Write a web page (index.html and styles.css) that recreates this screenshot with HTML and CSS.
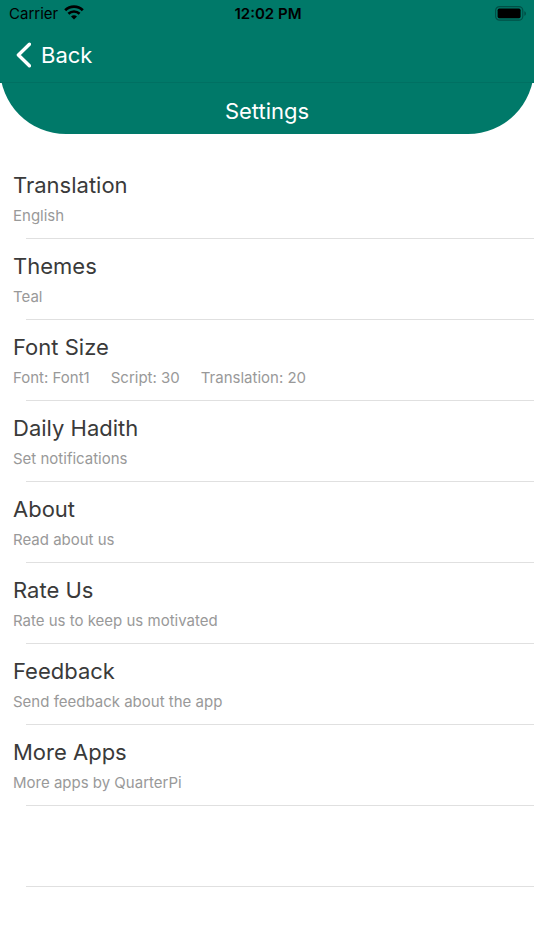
FILE: index.html
```
<!DOCTYPE html>
<html lang="en">
<head>
    <meta charset="UTF-8">
    <meta name="viewport" content="width=device-width, initial-scale=1">
    <title>Settings</title>
    <link rel="stylesheet" href="styles.css">
</head>
<body>
    <header class="top">
        <div class="status-bar">
            <div class="carrier">
                <span>Carrier</span>
                <svg class="wifi" width="20" height="15" viewBox="0 0 20 15" aria-hidden="true">
                    <path d="M1.2 5.2a12.6 12.6 0 0 1 17.6 0" fill="none" stroke="#000" stroke-width="2.8"/>
                    <path d="M4.4 8.7a8.1 8.1 0 0 1 11.2 0" fill="none" stroke="#000" stroke-width="2.6"/>
                    <path d="M7 11.6a4.4 4.4 0 0 1 6 0L10 14.6z" fill="#000"/>
                </svg>
            </div>
            <span class="time">12:02 PM</span>
            <svg class="battery" width="32" height="15" viewBox="0 0 32 15" aria-hidden="true">
                <rect x=".6" y=".6" width="27.2" height="13.6" rx="4" fill="none" stroke="#004f46" stroke-width="1.2"/>
                <rect x="2.6" y="2.6" width="23" height="9.6" rx="1.6" fill="#000"/>
                <path d="M29.3 5.2c2.2.6 2.2 4 0 4.6z" fill="#004f46"/>
            </svg>
        </div>
        <nav class="nav-bar">
            <button type="button" class="back">
                <svg width="15" height="26" viewBox="0 0 15 26" aria-hidden="true">
                    <path d="M13.4 2.3L2.4 13L13.4 23.7" fill="none" stroke="#fff" stroke-width="3.4" stroke-linecap="round" stroke-linejoin="round"/>
                </svg>
                <span>Back</span>
            </button>
        </nav>
    </header>

    <div class="banner">
        <h1>Settings</h1>
    </div>

    <ul class="settings">
        <li><a href="#translation"><span class="title">Translation</span><span class="detail">English</span></a></li>
        <li><a href="#themes"><span class="title">Themes</span><span class="detail">Teal</span></a></li>
        <li>
            <a href="#font-size">
                <span class="title">Font Size</span>
                <span class="detail"><span>Font: Font1</span><span>Script: 30</span><span>Translation: 20</span></span>
            </a>
        </li>
        <li><a href="#daily-hadith"><span class="title">Daily Hadith</span><span class="detail">Set notifications</span></a></li>
        <li><a href="#about"><span class="title">About</span><span class="detail">Read about us</span></a></li>
        <li><a href="#rate"><span class="title">Rate Us</span><span class="detail">Rate us to keep us motivated</span></a></li>
        <li><a href="#feedback"><span class="title">Feedback</span><span class="detail">Send feedback about the app</span></a></li>
        <li><a href="#more-apps"><span class="title">More Apps</span><span class="detail">More apps by QuarterPi</span></a></li>
        <li></li>
    </ul>
</body>
</html>
```
FILE: styles.css
```
* {
    box-sizing: border-box;
}
body {
    margin: 0;
    background-color: #ffffff;
    color: #3a3a3a;
    font-family: Inter, "Liberation Sans", sans-serif;
}

/* Header */
.top {
    position: relative;
    z-index: 1;
    background-color: #007969;
    border-bottom: 1px solid #007062;
}
.status-bar {
    display: grid;
    grid-template-columns: 1fr auto 1fr;
    align-items: center;
    height: 28px;
    padding: 0 7px 0 9px;
    color: #000000;
    font-size: 15px;
    line-height: 20px;
}
.carrier {
    display: flex;
    align-items: center;
    gap: 6px;
}
.wifi {
    margin-bottom: 3px;
}
.time {
    font-weight: 600;
}
.battery {
    justify-self: end;
    margin-bottom: 1px;
}
.nav-bar {
    display: flex;
    height: 54px;
    padding: 0 16px;
}
.back {
    display: flex;
    align-items: center;
    gap: 10px;
    padding: 0;
    border: 0;
    background: none;
    color: #ffffff;
    font-family: inherit;
    font-size: 22px;
    cursor: pointer;
}

/* Rounded title area, tucked under the header */
.banner {
    display: flex;
    align-items: flex-end;
    justify-content: center;
    height: 67px;
    margin-top: -16px;
    padding-bottom: 9px;
    border-radius: 0 0 66px 66px;
    background-color: #007969;
    color: #ffffff;
}
h1 {
    margin: 0;
    font-size: 22px;
    font-weight: 400;
    line-height: 28px;
}

/* Settings list */
.settings {
    margin: 24px 0 0;
    padding: 0;
    list-style: none;
}
.settings li {
    height: 81px;
}
.settings li::after {
    content: "";
    display: block;
    height: 1px;
    margin-left: 26px;
    background-color: #e0e0e0;
}
.settings li:empty {
    padding-top: 80px;
}
.settings a {
    display: flex;
    flex-direction: column;
    gap: 7px;
    padding: 13px 13px 12px;
    color: inherit;
    text-decoration: none;
}
.title {
    font-size: 22px;
    line-height: 28px;
}
.detail {
    display: flex;
    gap: 21px;
    color: #999999;
    font-size: 15px;
    line-height: 20px;
}
```
